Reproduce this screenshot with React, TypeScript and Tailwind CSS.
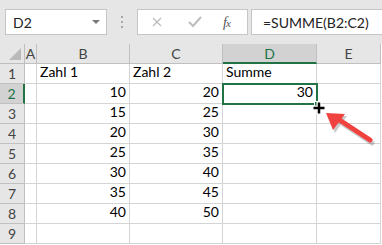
import React from "react";

const cols = ["A", "B", "C", "D", "E"];
const colWidths = "25px 12px 93px 93px 94px 64px";

const rows: (string | number)[][] = [
  ["", "Zahl 1", "Zahl 2", "Summe", ""],
  ["", 10, 20, 30, ""],
  ["", 15, 25, "", ""],
  ["", 20, 30, "", ""],
  ["", 25, 35, "", ""],
  ["", 30, 40, "", ""],
  ["", 35, 45, "", ""],
  ["", 40, 50, "", ""],
  ["", "", "", "", ""],
];

function Toolbar() {
  return (
    <div className="h-[44px] bg-[#e6e6e6] flex items-start pt-[9px] pl-[5px]">
      <div className="w-[102px] h-[26px] bg-white border border-[#c6c6c6] flex items-center justify-between pl-[7px] pr-[6px]">
        <span className="text-[14px] text-[#222]">D2</span>
        <svg width="8" height="5" viewBox="0 0 8 5">
          <polygon points="0,0 8,0 4,4" fill="#7a7a7a" />
        </svg>
      </div>
      <div className="w-[30px] h-[26px] flex flex-col items-center justify-center gap-[3px]">
        <span className="w-[2px] h-[2px] bg-[#a9a9a9]" />
        <span className="w-[2px] h-[2px] bg-[#a9a9a9]" />
        <span className="w-[2px] h-[2px] bg-[#a9a9a9]" />
      </div>
      <div className="w-[111px] h-[26px] bg-white border border-[#c6c6c6] flex items-center pl-[13px]">
        <svg width="12" height="12" viewBox="0 0 12 12" className="mr-[25px]">
          <path d="M2 2 L10 10 M10 2 L2 10" stroke="#bdbdbd" strokeWidth="1.4" />
        </svg>
        <svg width="14" height="12" viewBox="0 0 14 12" className="mr-[21px]">
          <path d="M1 6 L5 10 L13 1" stroke="#bdbdbd" strokeWidth="2" fill="none" />
        </svg>
        <span className="italic text-[14px] text-[#555] font-['Liberation_Serif',serif] tracking-[-1px]">
          f<span className="text-[11px]">x</span>
        </span>
      </div>
      <div className="ml-[3px] w-[131px] h-[26px] bg-white border border-[#c6c6c6] border-r-0 flex items-center pl-[11px]">
        <span className="text-[14px] text-[#222]">=SUMME(B2:C2)</span>
      </div>
    </div>
  );
}

function Sheet() {
  return (
    <div
      className="relative grid bg-white"
      style={{ gridTemplateColumns: colWidths, gridAutoRows: "20px" }}
    >
      {/* corner */}
      <div className="bg-[#e6e6e6] border-r border-b border-[#bdbdbd] relative">
        <svg width="12" height="12" viewBox="0 0 12 12" className="absolute right-[3px] bottom-[3px]">
          <polygon points="12,0 12,12 0,12" fill="#b9b9b9" />
        </svg>
      </div>
      {cols.map((c) => {
        const active = c === "D";
        return (
          <div
            key={c}
            className={
              active
                ? "bg-[#d2d2d2] border-r border-[#c0c0c0] border-b-2 border-b-[#217346] flex items-center justify-center text-[14px] text-[#217346]"
                : "bg-[#e6e6e6] border-r border-b border-[#c0c0c0] flex items-center justify-center text-[14px] text-[#444]"
            }
          >
            {c}
          </div>
        );
      })}
      {rows.map((row, r) => {
        const n = r + 1;
        const active = n === 2;
        return (
          <React.Fragment key={n}>
            <div
              className={
                active
                  ? "bg-[#d2d2d2] border-b border-[#c0c0c0] border-r-2 border-r-[#217346] flex items-center justify-center text-[14px] text-[#217346]"
                  : "bg-[#e6e6e6] border-r border-b border-[#c0c0c0] flex items-center justify-center text-[14px] text-[#444]"
              }
            >
              {n}
            </div>
            {row.map((v, i) => (
              <div
                key={i}
                className={
                  typeof v === "number"
                    ? "border-r border-b border-[#d4d4d4] flex items-end justify-end pr-[3px] pb-[1px] text-[14px] text-black"
                    : "border-r border-b border-[#d4d4d4] flex items-end pl-[3px] pb-[1px] text-[14px] text-black"
                }
              >
                {v}
              </div>
            ))}
          </React.Fragment>
        );
      })}

      {/* active cell D2 */}
      <div className="absolute left-[222px] top-[39px] w-[96px] h-[22px] border-2 border-[#217346] pointer-events-none" />
      <div className="absolute left-[314px] top-[57px] w-[6px] h-[6px] bg-[#217346] border border-white" />

      {/* fill cursor */}
      <svg width="16" height="16" viewBox="0 0 16 16" className="absolute left-[311px] top-[56px]">
        <path d="M8 1.5 V14.5 M1.5 8 H14.5" stroke="white" strokeWidth="5" />
        <path d="M8 2.5 V13.5 M2.5 8 H13.5" stroke="black" strokeWidth="2.5" />
      </svg>

      {/* red arrow */}
      <svg width="60" height="45" viewBox="0 0 60 45" className="absolute left-[320px] top-[63px]">
        <g transform="translate(2,3)" opacity="0.25">
          <path d="M50 33 L18 12" stroke="#333" strokeWidth="5" strokeLinecap="round" />
          <polygon points="6,6 25,6 13,23" fill="#333" />
        </g>
        <path d="M50 33 L18 12" stroke="#f0423f" strokeWidth="5" strokeLinecap="round" />
        <polygon points="6,6 25,7 13,23" fill="#f0423f" />
      </svg>
    </div>
  );
}

export default function App() {
  return (
    <div className="w-[382px] h-[245px] overflow-hidden bg-white font-['Lato','Liberation_Sans',sans-serif]">
      <Toolbar />
      <Sheet />
    </div>
  );
}
